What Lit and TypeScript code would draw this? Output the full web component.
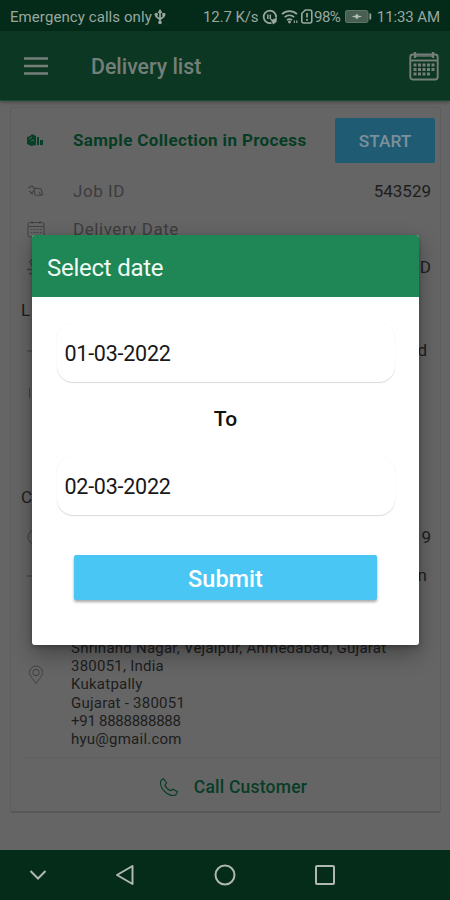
import { LitElement, html, css, svg } from "lit";
import { customElement } from "lit/decorators.js";

const icon = (w: number, h: number, body: unknown) =>
  html`<svg width=${w} height=${h} viewBox="0 0 ${w} ${h}" fill="none" stroke="currentColor">${body}</svg>`;

const usb = icon(12, 16, svg`<path d="M6 1.5v12M2.2 5v2.5L6 10.5l3.8-3V5" stroke-width="1.7"/><path d="M6 0l2.5 4h-5z" fill="currentColor" stroke="none"/><circle cx="6" cy="13.5" r="1.8" fill="currentColor" stroke="none"/><circle cx="2.2" cy="5.5" r="1.7" fill="currentColor" stroke="none"/><rect x="8.3" y="4" width="3" height="3" fill="currentColor" stroke="none"/>`);
const nfc = icon(16, 16, svg`<path d="M9.5 13.8A6.2 6.2 0 1 1 14 8.5" stroke-width="1.8"/><path d="M5.8 10v-4.500M8.300 10v-4.500" stroke-width="1.500"/><path d="M7.500 9l3 1.500 4.500-2-.5 4.500-3.500 2.500-1-2.500z" fill="currentColor" stroke="none"/>`);
const wifi = icon(17, 14, svg`<path d="M1 4.200c4.300-4 10.700-4 15 0M3.700 7.200c2.700-2.500 6.700-2.500 9.500 0M6 10.200c1.500-1.300 3.500-1.300 5 0" stroke-width="1.700"/><circle cx="8.500" cy="12" r="1.400" fill="currentColor" stroke="none"/><path d="M13.300 10.500v2.500M15.800 10.500v2.500" stroke-width="1.200"/>`);
const sim = icon(12, 15, svg`<path d="M4.300 1h4.500q2 0 2 2v9q0 2-2 2h-6q-2 0-2-2V4.500z" stroke-width="1.600"/><path d="M6 4v4.500M6 10v1.800" stroke-width="1.700"/>`);
const battery = icon(27, 13, svg`<rect x="0.500" y="0.500" width="22.500" height="12" rx="1.500" fill="#486052" stroke="#5d7467"/><path d="M25.300 3.500v6" stroke-width="1.800"/><path d="M6.500 6.500l4-1 1.500-2 1.200 2 4 1-4 1-1.200 2-1.500-2z" fill="#b4bdb7" stroke="none"/>`);
const menu = icon(24, 18, svg`<path d="M0 1.500h24M0 9h24M0 16.500h24" stroke-width="2.500"/>`);
const calendarLarge = icon(30, 30, svg`<rect x="1.300" y="3.500" width="27.400" height="25" rx="2.500" stroke-width="1.900"/><path d="M1.500 9.500h27" stroke-width="1.900"/><path d="M7 5h16" stroke-width="1.300"/><path d="M6 1v6M24 1v6" stroke-width="2.400"/><path d="M4.500 14h21M4.500 18.500h21M4.500 23h17" stroke-width="3" stroke-dasharray="3 1.500"/>`);
const boxes = icon(17, 14, svg`<path d="M0 4l3-1 2-2 4 2v9l-5 1-4-2z" fill="currentColor" stroke="none"/><path d="M2 6l3-2M4 8l3-1" stroke="#585e5b"/><path d="M10 4h2v8h-2zM13 7h3v5h-3z" fill="currentColor" stroke="none"/>`);
const tag = icon(18, 14, svg`<path d="M1 4l4-2 3 3-4 5M2 7l4 3M8 4l6 1 2 6M7 6l1 5 7 .5M12 8l2 3" stroke-width="1.100"/>`);
const calendarSmall = icon(18, 18, svg`<rect x="1" y="2.500" width="16" height="14.500" rx="1.500"/><path d="M1 6.500h16M5 1v3M13 1v3"/><path d="M4 9.500h11M4 12.500h11" stroke-dasharray="1.500 1.500"/>`);
const person = icon(18, 18, svg`<path d="M3 5a3.500 3.500 0 0 1 7 0c0 4-6 4-6 0M0 11.500h8M2 15.500h11" stroke-width="1.500"/>`);
const pin = icon(18, 20, svg`<path d="M9 18.500C5.500 13.500 2.500 10.800 2.500 7.500a6.500 6.500 0 0 1 13 0c0 3.300-3 6-6.500 11z"/><circle cx="9" cy="7.500" r="3.200"/>`);
const phone = icon(20, 20, svg`<path d="M2 3.500L4.500 1.500 7.500 6 5.800 8c1 2.500 3.200 4.600 5.800 5.800l2.200-1.600 4.700 2.600-1.800 3.200C9.500 20.500-.5 11 2 3.500z" stroke-width="1.100"/>`);
const stub = icon(18, 18, svg`<path d="M0 10h5"/>`);
const ring = icon(18, 18, svg`<circle cx="8" cy="9" r="7"/>`);
const bar = icon(18, 18, svg`<path d="M2.500 4v10"/>`);

@customElement("app-root")
export class AppRoot extends LitElement {
  static styles = css`
    :host {
      display: flex; flex-direction: column; position: relative;
      width: 450px; height: 900px; overflow: hidden; background: #656565;
      font-family: Roboto, sans-serif; color: #1d1d1d;
    }
    svg { display: block; flex: none; }
    * { box-sizing: border-box; }
    .status {
      height: 31px; flex: none; background: #042b19; color: #9aa79f; display: flex;
      align-items: center; padding: 2px 10px 0 10px; font-size: 15px; white-space: nowrap;
    }
    .carrier { width: 142px; letter-spacing: 0.08px; }
    .usb { margin-left: 2px; }
    .speed { margin-left: 37px; width: 57px; letter-spacing: -0.1px; }
    .nfc { margin-left: 2px; }
    .wifi { margin-left: 3px; }
    .sim { margin-left: 3px; }
    .percent { width: 30px; letter-spacing: -0.5px; margin-left: 1px; }
    .battery { margin-left: 1px; }
    .clock { margin-left: auto; letter-spacing: -0.1px; }
    .appbar {
      height: 70px; flex: none; background: #0c3722; color: #747f79; display: flex;
      align-items: center; padding: 0 11px 0 24px; border-bottom: 1px solid #174a34;
      box-shadow: 0 1px 4px rgba(0,0,0,.35);
    }
    .title { margin-left: 43px; flex: 1; font-size: 21.300px; font-weight: 500; padding-top: 1px; }
    .card {
      margin: 6px 9px 0 10px; height: 706px; flex: none; border: 1px solid #5e5e5e;
      border-bottom: 2px solid #585858; border-radius: 3px; display: flex; flex-direction: column;
    }
    .row { display: flex; align-items: center; height: 38px; padding: 0 9px 0 16px; flex: none; font-size: 17px; }
    .row svg { color: #414141; }
    .label { margin-left: 28px; color: #3c3c3c; flex: 1; letter-spacing: 0.55px; }
    .head { height: 64px; padding-right: 5px; }
    .head svg { color: #064027; margin-right: 1px; }
    .process { margin-left: 28px; flex: 1; color: #053d24; font-weight: 700; font-size: 17px; letter-spacing: 0.36px; white-space: nowrap; }
    .start {
      width: 100px; height: 45px; border-radius: 2px; background: #1f5c74; color: #7c9099;
      display: flex; align-items: center; justify-content: center; font-size: 17.300px; font-weight: 500; padding-top: 1px;
    }
    .narrow { padding-right: 13px; }
    .tall { height: 48px; }
    .section { height: 45px; padding: 3px 0 0 10px; font-size: 17px; display: flex; align-items: center; flex: none; }
    .customer { margin-top: 59px; height: 42px; padding-top: 0; }
    .address {
      display: flex; align-items: flex-start; padding: 0 16px; height: 166px; flex: none;
      font-size: 15px; line-height: 18.200px; letter-spacing: 0.24px; margin-top: -3px;
    }
    .address svg { margin-top: 74px; color: #414141; }
    .lines { margin-left: 26px; padding-top: 48px; white-space: nowrap; }
    .digits { letter-spacing: -0.27px; }
    .call {
      flex: 1; display: flex; align-items: center; justify-content: center; gap: 15px;
      color: #073d26; font-size: 17.500px; font-weight: 500; letter-spacing: 0.2px; border-top: 1px solid #5f5f5f;
      padding-top: 5px; margin-left: 15px;
    }
    .nav { height: 50px; margin-top: auto; flex: none; background: #052b19; color: #b0b8b3; display: flex; align-items: center; padding-left: 29px; }
    .back { margin-left: 67px; }
    .home { margin-left: 78px; }
    .recent { margin-left: 78px; }
    .dialog {
      position: absolute; left: 32px; top: 235px; width: 387px; height: 410px; background: #fff;
      border-radius: 3px; overflow: hidden; display: flex; flex-direction: column; align-items: center;
    }
    .shade {
      position: absolute; left: 32px; top: 235px; width: 387px; height: 410px; border-radius: 3px;
      box-shadow: 0 9px 22px rgba(0,0,0,.32), 0 2px 5px rgba(0,0,0,.25);
    }
    .dialog-head {
      align-self: stretch; height: 62px; background: #1f8656; color: #f0faf4; padding: 3px 15px 0;
      display: flex; align-items: center; font-size: 24px; letter-spacing: -0.25px; flex: none;
    }
    .field {
      width: 338px; height: 59px; border-radius: 16px; margin-top: 26px; flex: none; padding: 2px 0 0 8px;
      display: flex; align-items: center; font-size: 21.500px; letter-spacing: -0.25px; color: #181818;
      box-shadow: 0 1px 1px #dadada, 0 0 1px #eee;
    }
    .to { height: 74px; display: flex; align-items: center; font-size: 21px; font-weight: 500; flex: none; color: #111; }
    .second { margin-top: 0; }
    .submit {
      width: 303px; height: 45px; margin-top: 40px; flex: none; border-radius: 2px; background: #49c6f3;
      color: #fff; display: flex; align-items: center; justify-content: center; padding-top: 2px;
      font-size: 23.500px; font-weight: 500; box-shadow: 0 2px 3px rgba(0,0,0,.35);
    }
  `;

  render() {
    return html`
      <div class="status">
        <span class="carrier">Emergency calls only</span><span class="usb">${usb}</span>
        <span class="speed">12.7 K/s</span><span class="nfc">${nfc}</span><span class="wifi">${wifi}</span>
        <span class="sim">${sim}</span><span class="percent">98%</span><span class="battery">${battery}</span>
        <span class="clock">11:33 AM</span>
      </div>
      <div class="appbar">${menu}<span class="title">Delivery list</span>${calendarLarge}</div>
      <div class="card">
        <div class="row head">${boxes}<span class="process">Sample Collection in Process</span><span class="start">START</span></div>
        <div class="row">${tag}<span class="label">Job ID</span><span>543529</span></div>
        <div class="row">${calendarSmall}<span class="label">Delivery Date</span></div>
        <div class="row">${person}<span class="label"></span><span>D</span></div>
        <div class="section">L</div>
        <div class="row narrow">${stub}<span class="label"></span><span>d</span></div>
        <div class="row tall">${bar}</div>
        <div class="section customer">C</div>
        <div class="row">${ring}<span class="label"></span><span>9</span></div>
        <div class="row narrow">${stub}<span class="label"></span><span>n</span></div>
        <div class="address">${pin}
          <div class="lines">
            <div>Shrinand Nagar, Vejalpur, Ahmedabad, Gujarat</div>
            <div>380051, India</div><div>Kukatpally</div><div>Gujarat - 380051</div>
            <div class="digits">+91 8888888888</div><div>hyu@gmail.com</div>
          </div>
        </div>
        <div class="call">${phone}<span>Call Customer</span></div>
      </div>
      <div class="nav">
        ${icon(18, 12, svg`<path d="M1.500 2L9 9.500 16.500 2" stroke-width="2"/>`)}
        <span class="back">${icon(22, 24, svg`<path d="M18.500 3v18L3 12z" stroke-width="2" stroke-linejoin="round"/>`)}</span>
        <span class="home">${icon(22, 22, svg`<circle cx="11" cy="11" r="9.500" stroke-width="2"/>`)}</span>
        <span class="recent">${icon(22, 22, svg`<rect x="2" y="2" width="18" height="18" rx="1" stroke-width="2"/>`)}</span>
      </div>
      <div class="shade"></div>
      <div class="dialog">
        <div class="dialog-head">Select date</div>
        <div class="field">01-03-2022</div>
        <div class="to">To</div>
        <div class="field second">02-03-2022</div>
        <div class="submit">Submit</div>
      </div>
    `;
  }
}
